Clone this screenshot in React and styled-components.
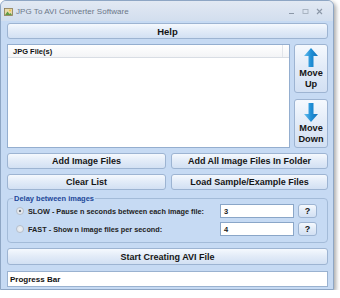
import React from 'react';
import styled, { createGlobalStyle } from 'styled-components';

const Global = createGlobalStyle`
  html, body {
    margin: 0;
    padding: 0;
    background: #ffffff;
  }
  body {
    font-family: "Liberation Sans", Arial, sans-serif;
  }
`;

const Window = styled.div`
  width: 334px;
  height: 290px;
  box-sizing: border-box;
  border: 1px solid #8ea6c4;
  border-radius: 6px 6px 0 0;
  background: #c6daf3;
  box-shadow: 2px 2px 4px rgba(0, 0, 0, 0.35);
  display: flex;
  flex-direction: column;
  overflow: hidden;
`;

const TitleBar = styled.div`
  height: 20px;
  flex: 0 0 20px;
  display: flex;
  align-items: center;
  padding: 0 6px 0 3px;
  background: linear-gradient(#e2e9f3, #d2deee);
  color: #6b7788;
  font-size: 8px;
  gap: 3px;
`;

const Title = styled.span`
  flex: 1;
  letter-spacing: 0.05px;
`;

const Controls = styled.div`
  display: flex;
  gap: 7px;
  align-items: center;
  padding-right: 4px;
`;

const Client = styled.div`
  flex: 1;
  display: flex;
  flex-direction: column;
  padding: 2px 5px 4px 6px;
  gap: 5px;
`;

const Button = styled.button`
  box-sizing: border-box;
  height: ${p => p.$h || 16}px;
  margin: 0;
  padding: 0;
  border: 1px solid #9db4d2;
  border-radius: 3px;
  background: linear-gradient(#f5f9fe, #e3ecf8 45%, #d2e0f3);
  font-family: "Liberation Sans", Arial, sans-serif;
  font-weight: bold;
  font-size: ${p => p.$fs || 9}px;
  color: #151515;
  display: flex;
  align-items: center;
  justify-content: center;
  cursor: default;
`;

const ListRow = styled.div`
  display: flex;
  gap: 4px;
  height: 104px;
`;

const ListBox = styled.div`
  flex: 1;
  background: #ffffff;
  border: 1px solid #94aecf;
  display: flex;
  flex-direction: column;
`;

const ListHeader = styled.div`
  height: 12px;
  display: flex;
  border-bottom: 1px solid #d8dde4;
  background: linear-gradient(#ffffff, #f3f4f6);
`;

const HeaderCell = styled.div`
  width: ${p => p.$w}px;
  flex: ${p => (p.$w ? '0 0 auto' : '1')};
  border-right: ${p => (p.$w ? '1px solid #e2e5ea' : 'none')};
  font-size: 7.5px;
  font-weight: bold;
  color: #111;
  padding-left: 5px;
  display: flex;
  align-items: center;
`;

const SideButtons = styled.div`
  width: 34px;
  display: flex;
  flex-direction: column;
  gap: 6px;
`;

const MoveButton = styled(Button)`
  flex: 1;
  height: auto;
  flex-direction: column;
  line-height: 10px;
  gap: 1px;
  font-size: 9.2px;
`;

const Pair = styled.div`
  display: grid;
  grid-template-columns: 159px 1fr;
  gap: 5px;
`;

const Group = styled.fieldset`
  margin: -1px 0 0 0;
  padding: 1px 10px 6px 8px;
  border: 1px solid #a3bbd8;
  border-radius: 4px;
  display: flex;
  flex-direction: column;
  gap: 4px;
  min-width: 0;
`;

const Legend = styled.legend`
  padding: 0 1px;
  margin-left: -3px;
  font-size: 7.5px;
  font-weight: bold;
  color: #22489a;
  line-height: 9px;
`;

const OptionRow = styled.div`
  display: flex;
  align-items: center;
  height: 14px;
`;

const Radio = styled.span`
  width: 6px;
  height: 6px;
  border-radius: 50%;
  border: 1px solid #b6bfcb;
  background: radial-gradient(circle, ${p => (p.$on ? '#6c7480 0 1.2px' : '#f2f4f7 0')}, #e6eaef 1.6px);
  margin-right: 4px;
  flex: 0 0 auto;
`;

const OptionLabel = styled.span`
  flex: 1;
  font-size: 7.3px;
  font-weight: bold;
  color: #222;
  white-space: nowrap;
`;

const Field = styled.div`
  box-sizing: border-box;
  width: 74px;
  height: 14px;
  border: 1px solid #8aa6c8;
  background: #fff;
  font-size: 7.5px;
  font-weight: bold;
  padding-left: 3px;
  display: flex;
  align-items: center;
  color: #222;
`;

const Hint = styled(Button)`
  width: 19px;
  height: 14px;
  margin-left: 4px;
  font-size: 9px;
`;

const Progress = styled.div`
  box-sizing: border-box;
  height: 16px;
  margin-top: 1px;
  background: #fff;
  border: 1px solid #9ab2d0;
  font-size: 8px;
  font-weight: bold;
  color: #111;
  padding-left: 2px;
  display: flex;
  align-items: center;
`;

const AppIcon = () => (
  <svg width="9" height="9" viewBox="0 0 9 9">
    <rect x="0.5" y="1.5" width="8" height="7" fill="#e8d9a8" stroke="#8a7a52" strokeWidth="0.8" />
    <path d="M1 8 L3.5 4.5 L5.5 7 L6.5 6 L8 8 Z" fill="#5f9c45" />
    <circle cx="6" cy="3.5" r="1" fill="#f3c33a" />
  </svg>
);

const WinControls = () => (
  <Controls>
    <svg width="7" height="7" viewBox="0 0 7 7">
      <path d="M1 5.5 H6" stroke="#8b97a7" strokeWidth="1.2" />
    </svg>
    <svg width="7" height="7" viewBox="0 0 7 7">
      <rect x="1" y="1.5" width="5" height="4" fill="none" stroke="#a4afbd" strokeWidth="0.9" />
    </svg>
    <svg width="7" height="7" viewBox="0 0 7 7">
      <path d="M1 1 L6 6 M6 1 L1 6" stroke="#8b97a7" strokeWidth="1.1" />
    </svg>
  </Controls>
);

const Arrow = ({ down }) => (
  <svg width="14" height="19" viewBox="0 0 14 19" style={{ transform: down ? 'scaleY(-1)' : 'none' }}>
    <defs>
      <linearGradient id={down ? 'ad' : 'au'} x1="0" y1="0" x2="1" y2="0">
        <stop offset="0" stopColor="#6cc0ef" />
        <stop offset="0.5" stopColor="#1f8fd6" />
        <stop offset="1" stopColor="#1373bb" />
      </linearGradient>
    </defs>
    <path d="M7 0 L14 8 L9.5 8 L9.5 19 L4.5 19 L4.5 8 L0 8 Z" fill={`url(#${down ? 'ad' : 'au'})`} />
  </svg>
);

export default function App() {
  return (
    <>
      <Global />
      <Window>
        <TitleBar>
          <AppIcon />
          <Title>JPG To AVI Converter Software</Title>
          <WinControls />
        </TitleBar>
        <Client>
          <Button $fs={9.5}>Help</Button>
          <ListRow>
            <ListBox>
              <ListHeader>
                <HeaderCell $w={269}>JPG File(s)</HeaderCell>
                <HeaderCell />
              </ListHeader>
            </ListBox>
            <SideButtons>
              <MoveButton>
                <Arrow />
                <span>Move</span>
                <span>Up</span>
              </MoveButton>
              <MoveButton>
                <Arrow down />
                <span>Move</span>
                <span>Down</span>
              </MoveButton>
            </SideButtons>
          </ListRow>
          <Pair>
            <Button>Add Image Files</Button>
            <Button>Add All Image Files In Folder</Button>
          </Pair>
          <Pair>
            <Button>Clear List</Button>
            <Button>Load Sample/Example Files</Button>
          </Pair>
          <Group>
            <Legend>Delay between images</Legend>
            <OptionRow>
              <Radio $on />
              <OptionLabel>SLOW - Pause n seconds between each image file:</OptionLabel>
              <Field>3</Field>
              <Hint>?</Hint>
            </OptionRow>
            <OptionRow>
              <Radio />
              <OptionLabel>FAST - Show n image files per second:</OptionLabel>
              <Field>4</Field>
              <Hint>?</Hint>
            </OptionRow>
          </Group>
          <Button $h={17}>Start Creating AVI File</Button>
          <Progress>Progress Bar</Progress>
        </Client>
      </Window>
    </>
  );
}
